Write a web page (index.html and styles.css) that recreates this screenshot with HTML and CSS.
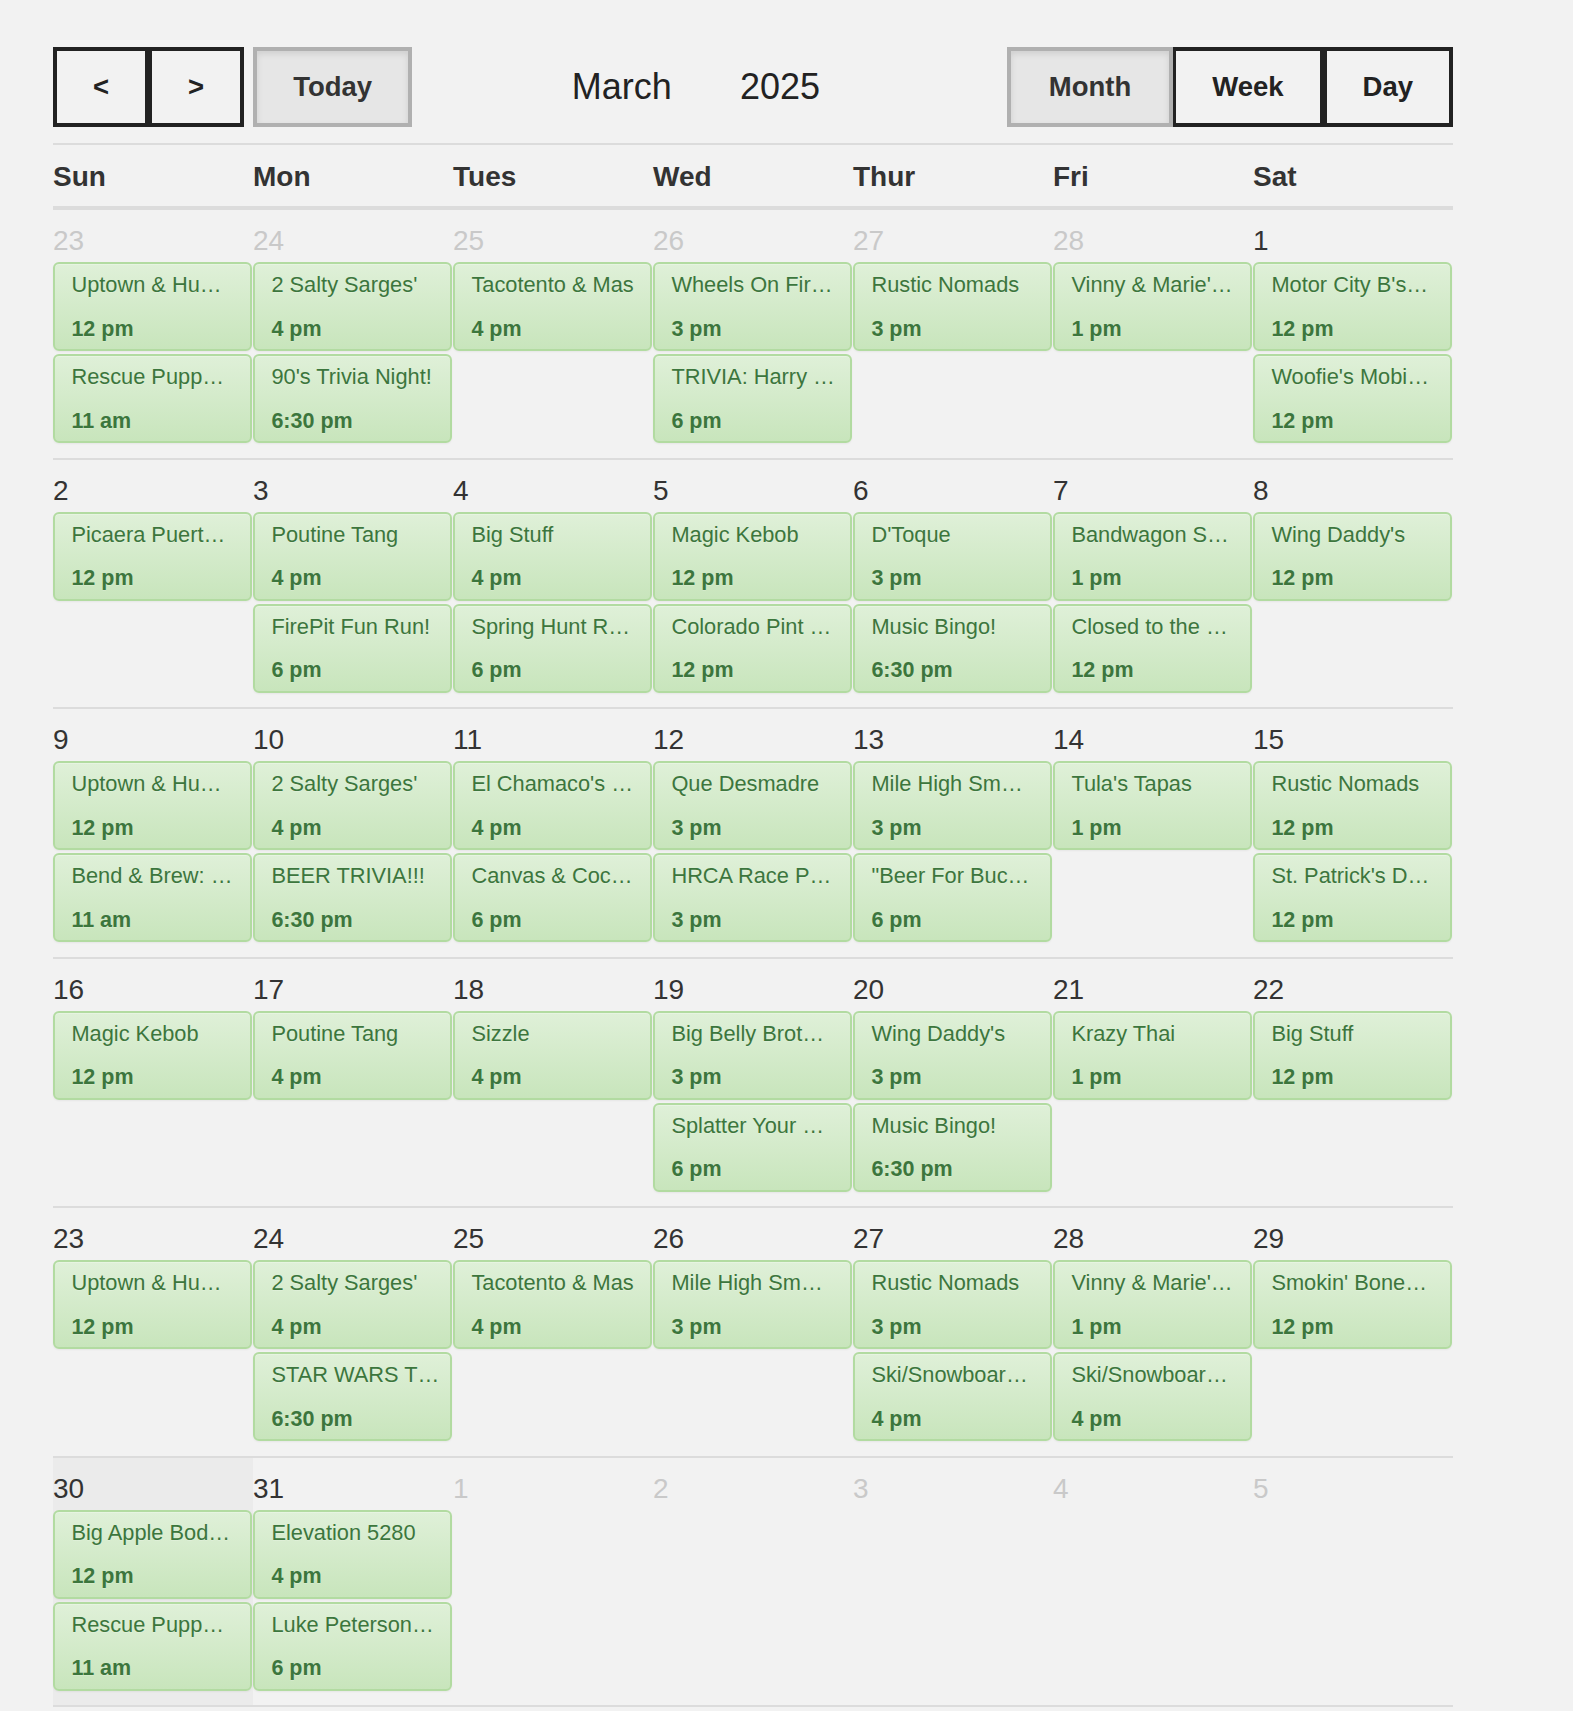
FILE: index.html
```html
<!DOCTYPE html>
<html lang="en">
<head>
<meta charset="utf-8">
<title>Calendar — March 2025</title>
<link rel="stylesheet" href="styles.css">
</head>
<body>
<div class="cal">
  <div class="toolbar">
    <div class="btn-group">
      <button class="btn">&lt;</button><button class="btn">&gt;</button>
    </div>
    <button class="btn btn-active btn-today">Today</button>
    <div class="title"><span class="title-month">March</span><span>2025</span></div>
    <div class="btn-group">
      <button class="btn btn-active btn-month">Month</button><button class="btn">Week</button><button class="btn">Day</button>
    </div>
  </div>

  <div class="weekdays">
    <div>Sun</div><div>Mon</div><div>Tues</div><div>Wed</div><div>Thur</div><div>Fri</div><div>Sat</div>
  </div>

  <div class="month">
    <div class="week">
      <div class="day other"><div class="date">23</div>
        <div class="event"><div class="ev-title">Uptown &amp; Hu…</div><div class="ev-time">12 pm</div></div>
        <div class="event"><div class="ev-title">Rescue Pupp…</div><div class="ev-time">11 am</div></div>
      </div>
      <div class="day other"><div class="date">24</div>
        <div class="event"><div class="ev-title">2 Salty Sarges'</div><div class="ev-time">4 pm</div></div>
        <div class="event"><div class="ev-title">90's Trivia Night!</div><div class="ev-time">6:30 pm</div></div>
      </div>
      <div class="day other"><div class="date">25</div>
        <div class="event"><div class="ev-title">Tacotento &amp; Mas</div><div class="ev-time">4 pm</div></div>
      </div>
      <div class="day other"><div class="date">26</div>
        <div class="event"><div class="ev-title">Wheels On Fir…</div><div class="ev-time">3 pm</div></div>
        <div class="event"><div class="ev-title">TRIVIA: Harry …</div><div class="ev-time">6 pm</div></div>
      </div>
      <div class="day other"><div class="date">27</div>
        <div class="event"><div class="ev-title">Rustic Nomads</div><div class="ev-time">3 pm</div></div>
      </div>
      <div class="day other"><div class="date">28</div>
        <div class="event"><div class="ev-title">Vinny &amp; Marie'…</div><div class="ev-time">1 pm</div></div>
      </div>
      <div class="day"><div class="date">1</div>
        <div class="event"><div class="ev-title">Motor City B's…</div><div class="ev-time">12 pm</div></div>
        <div class="event"><div class="ev-title">Woofie's Mobi…</div><div class="ev-time">12 pm</div></div>
      </div>
    </div>

    <div class="week">
      <div class="day"><div class="date">2</div>
        <div class="event"><div class="ev-title">Picaera Puert…</div><div class="ev-time">12 pm</div></div>
      </div>
      <div class="day"><div class="date">3</div>
        <div class="event"><div class="ev-title">Poutine Tang</div><div class="ev-time">4 pm</div></div>
        <div class="event"><div class="ev-title">FirePit Fun Run!</div><div class="ev-time">6 pm</div></div>
      </div>
      <div class="day"><div class="date">4</div>
        <div class="event"><div class="ev-title">Big Stuff</div><div class="ev-time">4 pm</div></div>
        <div class="event"><div class="ev-title">Spring Hunt R…</div><div class="ev-time">6 pm</div></div>
      </div>
      <div class="day"><div class="date">5</div>
        <div class="event"><div class="ev-title">Magic Kebob</div><div class="ev-time">12 pm</div></div>
        <div class="event"><div class="ev-title">Colorado Pint …</div><div class="ev-time">12 pm</div></div>
      </div>
      <div class="day"><div class="date">6</div>
        <div class="event"><div class="ev-title">D'Toque</div><div class="ev-time">3 pm</div></div>
        <div class="event"><div class="ev-title">Music Bingo!</div><div class="ev-time">6:30 pm</div></div>
      </div>
      <div class="day"><div class="date">7</div>
        <div class="event"><div class="ev-title">Bandwagon S…</div><div class="ev-time">1 pm</div></div>
        <div class="event"><div class="ev-title">Closed to the …</div><div class="ev-time">12 pm</div></div>
      </div>
      <div class="day"><div class="date">8</div>
        <div class="event"><div class="ev-title">Wing Daddy's</div><div class="ev-time">12 pm</div></div>
      </div>
    </div>

    <div class="week">
      <div class="day"><div class="date">9</div>
        <div class="event"><div class="ev-title">Uptown &amp; Hu…</div><div class="ev-time">12 pm</div></div>
        <div class="event"><div class="ev-title">Bend &amp; Brew: …</div><div class="ev-time">11 am</div></div>
      </div>
      <div class="day"><div class="date">10</div>
        <div class="event"><div class="ev-title">2 Salty Sarges'</div><div class="ev-time">4 pm</div></div>
        <div class="event"><div class="ev-title">BEER TRIVIA!!!</div><div class="ev-time">6:30 pm</div></div>
      </div>
      <div class="day"><div class="date">11</div>
        <div class="event"><div class="ev-title">El Chamaco's …</div><div class="ev-time">4 pm</div></div>
        <div class="event"><div class="ev-title">Canvas &amp; Coc…</div><div class="ev-time">6 pm</div></div>
      </div>
      <div class="day"><div class="date">12</div>
        <div class="event"><div class="ev-title">Que Desmadre</div><div class="ev-time">3 pm</div></div>
        <div class="event"><div class="ev-title">HRCA Race P…</div><div class="ev-time">3 pm</div></div>
      </div>
      <div class="day"><div class="date">13</div>
        <div class="event"><div class="ev-title">Mile High Sm…</div><div class="ev-time">3 pm</div></div>
        <div class="event"><div class="ev-title">"Beer For Buc…</div><div class="ev-time">6 pm</div></div>
      </div>
      <div class="day"><div class="date">14</div>
        <div class="event"><div class="ev-title">Tula's Tapas</div><div class="ev-time">1 pm</div></div>
      </div>
      <div class="day"><div class="date">15</div>
        <div class="event"><div class="ev-title">Rustic Nomads</div><div class="ev-time">12 pm</div></div>
        <div class="event"><div class="ev-title">St. Patrick's D…</div><div class="ev-time">12 pm</div></div>
      </div>
    </div>

    <div class="week">
      <div class="day"><div class="date">16</div>
        <div class="event"><div class="ev-title">Magic Kebob</div><div class="ev-time">12 pm</div></div>
      </div>
      <div class="day"><div class="date">17</div>
        <div class="event"><div class="ev-title">Poutine Tang</div><div class="ev-time">4 pm</div></div>
      </div>
      <div class="day"><div class="date">18</div>
        <div class="event"><div class="ev-title">Sizzle</div><div class="ev-time">4 pm</div></div>
      </div>
      <div class="day"><div class="date">19</div>
        <div class="event"><div class="ev-title">Big Belly Brot…</div><div class="ev-time">3 pm</div></div>
        <div class="event"><div class="ev-title">Splatter Your …</div><div class="ev-time">6 pm</div></div>
      </div>
      <div class="day"><div class="date">20</div>
        <div class="event"><div class="ev-title">Wing Daddy's</div><div class="ev-time">3 pm</div></div>
        <div class="event"><div class="ev-title">Music Bingo!</div><div class="ev-time">6:30 pm</div></div>
      </div>
      <div class="day"><div class="date">21</div>
        <div class="event"><div class="ev-title">Krazy Thai</div><div class="ev-time">1 pm</div></div>
      </div>
      <div class="day"><div class="date">22</div>
        <div class="event"><div class="ev-title">Big Stuff</div><div class="ev-time">12 pm</div></div>
      </div>
    </div>

    <div class="week">
      <div class="day"><div class="date">23</div>
        <div class="event"><div class="ev-title">Uptown &amp; Hu…</div><div class="ev-time">12 pm</div></div>
      </div>
      <div class="day"><div class="date">24</div>
        <div class="event"><div class="ev-title">2 Salty Sarges'</div><div class="ev-time">4 pm</div></div>
        <div class="event"><div class="ev-title">STAR WARS T…</div><div class="ev-time">6:30 pm</div></div>
      </div>
      <div class="day"><div class="date">25</div>
        <div class="event"><div class="ev-title">Tacotento &amp; Mas</div><div class="ev-time">4 pm</div></div>
      </div>
      <div class="day"><div class="date">26</div>
        <div class="event"><div class="ev-title">Mile High Sm…</div><div class="ev-time">3 pm</div></div>
      </div>
      <div class="day"><div class="date">27</div>
        <div class="event"><div class="ev-title">Rustic Nomads</div><div class="ev-time">3 pm</div></div>
        <div class="event"><div class="ev-title">Ski/Snowboar…</div><div class="ev-time">4 pm</div></div>
      </div>
      <div class="day"><div class="date">28</div>
        <div class="event"><div class="ev-title">Vinny &amp; Marie'…</div><div class="ev-time">1 pm</div></div>
        <div class="event"><div class="ev-title">Ski/Snowboar…</div><div class="ev-time">4 pm</div></div>
      </div>
      <div class="day"><div class="date">29</div>
        <div class="event"><div class="ev-title">Smokin' Bone…</div><div class="ev-time">12 pm</div></div>
      </div>
    </div>

    <div class="week">
      <div class="day today"><div class="date">30</div>
        <div class="event"><div class="ev-title">Big Apple Bod…</div><div class="ev-time">12 pm</div></div>
        <div class="event"><div class="ev-title">Rescue Pupp…</div><div class="ev-time">11 am</div></div>
      </div>
      <div class="day"><div class="date">31</div>
        <div class="event"><div class="ev-title">Elevation 5280</div><div class="ev-time">4 pm</div></div>
        <div class="event"><div class="ev-title">Luke Peterson…</div><div class="ev-time">6 pm</div></div>
      </div>
      <div class="day other"><div class="date">1</div></div>
      <div class="day other"><div class="date">2</div></div>
      <div class="day other"><div class="date">3</div></div>
      <div class="day other"><div class="date">4</div></div>
      <div class="day other"><div class="date">5</div></div>
    </div>
  </div>
</div>
</body>
</html>
```

FILE: styles.css
```css
html, body {
  margin: 0;
  padding: 0;
  background: #f2f2f2;
}

body {
  font-family: "Liberation Sans", Arial, Helvetica, sans-serif;
  color: #333;
}

.cal {
  width: 1400px;
  margin-left: 53px;
  padding-top: 47px;
}

/* ---------- toolbar ---------- */
.toolbar {
  display: flex;
  align-items: center;
  height: 80px;
}

.btn-group {
  display: flex;
}

.btn {
  font-family: inherit;
  font-size: 27.5px;
  font-weight: bold;
  color: #222;
  height: 80px;
  padding: 0 36px;
  box-sizing: border-box;
  border: 4px solid #222;
  background: transparent;
  margin: 0;
  position: relative;
  cursor: pointer;
}

.btn + .btn {
  margin-left: -1px;
}

.btn-active {
  color: #333;
  background: #e6e6e6;
  border-color: #b0b0b0;
  box-shadow: inset 0 3px 6px rgba(0, 0, 0, 0.1);
  z-index: 1;
}

.btn-today {
  margin-left: 9px;
}

.btn-month {
  padding: 0 38px;
}

.title {
  flex: 1;
  text-align: center;
  padding-right: 27px;
  font-size: 36px;
  color: #222;
}

.title-month {
  margin-right: 68px;
}

/* ---------- weekday header ---------- */
.weekdays {
  display: grid;
  grid-template-columns: repeat(7, 200px);
  margin-top: 16px;
  border-top: 2px solid #dcdcdc;
  border-bottom: 4px solid #dcdcdc;
  padding: 16px 0 13px;
  font-size: 28px;
  font-weight: bold;
  line-height: 32px;
  color: #333;
}

/* ---------- month grid ---------- */
.month {
  border-bottom: 2px solid #dcdcdc;
}

.week {
  display: grid;
  grid-template-columns: repeat(7, 200px);
  height: 247.5px;
}

.week + .week {
  border-top: 2px solid #dcdcdc;
}

.day {
  min-width: 0;
}

.day.today {
  background: #ebebeb;
}

.date {
  padding-top: 16px;
  height: 30px;
  line-height: 30px;
  margin-bottom: 6px;
  font-size: 28px;
  color: #333;
}

.day.other .date {
  color: #c9c9c9;
}

.event {
  box-sizing: border-box;
  height: 89px;
  margin: 0 1.5px 3px 0;
  padding: 8px 8px 0 16.4px;
  border: 2px solid #b2dba1;
  border-radius: 6px;
  background: linear-gradient(to bottom, #dff0d8 0%, #c8e5bc 100%);
  box-shadow: inset 0 1px 0 rgba(255, 255, 255, 0.25), 0 1px 2px rgba(0, 0, 0, 0.05);
  color: #3c763d;
  text-shadow: 0 1px 0 rgba(255, 255, 255, 0.2);
}

.ev-title {
  font-size: 21.8px;
  line-height: 26px;
  white-space: nowrap;
  overflow: hidden;
}

.ev-time {
  margin-top: 17.8px;
  font-size: 21.5px;
  line-height: 26px;
  font-weight: bold;
}
```
